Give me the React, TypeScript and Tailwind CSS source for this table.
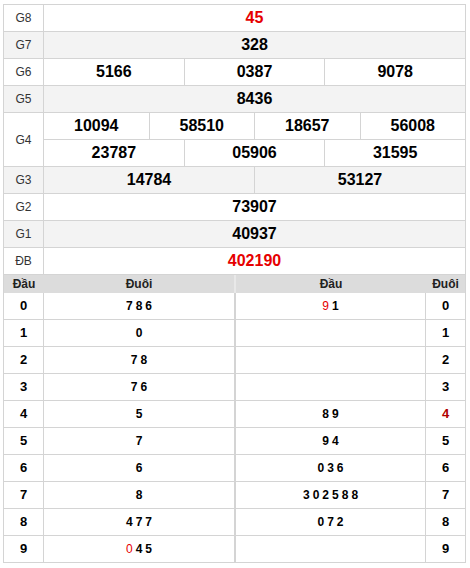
const prizes: { label: string; values: string[][]; red?: boolean; alt?: boolean }[] = [
  { label: 'G8', values: [['45']], red: true },
  { label: 'G7', values: [['328']], alt: true },
  { label: 'G6', values: [['5166', '0387', '9078']] },
  { label: 'G5', values: [['8436']], alt: true },
  { label: 'G4', values: [['10094', '58510', '18657', '56008'], ['23787', '05906', '31595']] },
  { label: 'G3', values: [['14784', '53127']], alt: true },
  { label: 'G2', values: [['73907']] },
  { label: 'G1', values: [['40937']], alt: true },
  { label: 'ĐB', values: [['402190']], red: true },
];

// [head digit, tails of that head, heads for that tail]; "!" marks a red digit
const loto: [string, string[], string[]][] = [
  ['0', ['7', '8', '6'], ['!9', '1']],
  ['1', ['0'], []],
  ['2', ['7', '8'], []],
  ['3', ['7', '6'], []],
  ['4', ['5'], ['8', '9']],
  ['5', ['7'], ['9', '4']],
  ['6', ['6'], ['0', '3', '6']],
  ['7', ['8'], ['3', '0', '2', '5', '8', '8']],
  ['8', ['4', '7', '7'], ['0', '7', '2']],
  ['9', ['!0', '4', '5'], []],
];

function Digits({ list }: { list: string[] }) {
  return (
    <span className="flex gap-[3px]">
      {list.map((d, i) =>
        d.startsWith('!') ? (
          <span key={i} className="text-[#e60000] font-normal">{d.slice(1)}</span>
        ) : (
          <span key={i}>{d}</span>
        )
      )}
    </span>
  );
}

export default function App() {
  return (
    <div className="bg-white w-[470px] h-[568px] pt-[4px] pl-[3px] font-['Liberation_Sans',Arial,sans-serif] text-[#222]">
      <div className="w-[463px] border border-b-0 border-[#d4d4d4]">
        {/* Prize table */}
        {prizes.map((p) => (
          <div key={p.label} className={`flex border-b border-[#d4d4d4] ${p.alt ? 'bg-[#f3f3f3]' : 'bg-white'}`}>
            <div className="w-[40px] shrink-0 border-r border-[#d4d4d4] flex items-center justify-center text-[12px] text-[#333]">
              {p.label}
            </div>
            <div className="flex-1 flex flex-col">
              {p.values.map((row, ri) => (
                <div key={ri} className={`flex h-[26px] ${ri > 0 ? 'border-t border-[#d4d4d4] h-[27px]' : ''}`}>
                  {row.map((v, vi) => (
                    <div
                      key={vi}
                      className={`flex-1 basis-0 flex items-center justify-center text-[16px] font-bold ${vi > 0 ? 'border-l border-[#d4d4d4]' : ''} ${p.red ? 'text-[#e60000]' : 'text-black'}`}
                    >
                      {v}
                    </div>
                  ))}
                </div>
              ))}
            </div>
          </div>
        ))}

        {/* Loto head/tail table */}
        <div className="flex h-[18px] bg-[#dcdcdc] text-[12px] font-bold text-[#222]">
          <div className="w-[40px] flex items-center justify-center">Đầu</div>
          <div className="w-[192px] flex items-center justify-center border-r-2 border-[#e8e8e8]">Đuôi</div>
          <div className="w-[190px] flex items-center justify-center">Đầu</div>
          <div className="flex-1 flex items-center justify-center">Đuôi</div>
        </div>
        {loto.map(([d, tails, heads]) => (
          <div key={d} className="flex h-[27px] border-b border-[#d4d4d4] text-[12px] font-bold text-black">
            <div className="w-[40px] shrink-0 border-r border-[#d4d4d4] flex items-center justify-center text-[13px]">{d}</div>
            <div className="w-[192px] shrink-0 border-r-2 border-[#d4d4d4] flex items-center justify-center">
              <Digits list={tails} />
            </div>
            <div className="w-[190px] shrink-0 border-r border-[#d4d4d4] flex items-center justify-center">
              <Digits list={heads} />
            </div>
            <div className={`flex-1 flex items-center justify-center text-[13px] ${d === '4' ? 'text-[#b00000]' : ''}`}>{d}</div>
          </div>
        ))}
      </div>
    </div>
  );
}
